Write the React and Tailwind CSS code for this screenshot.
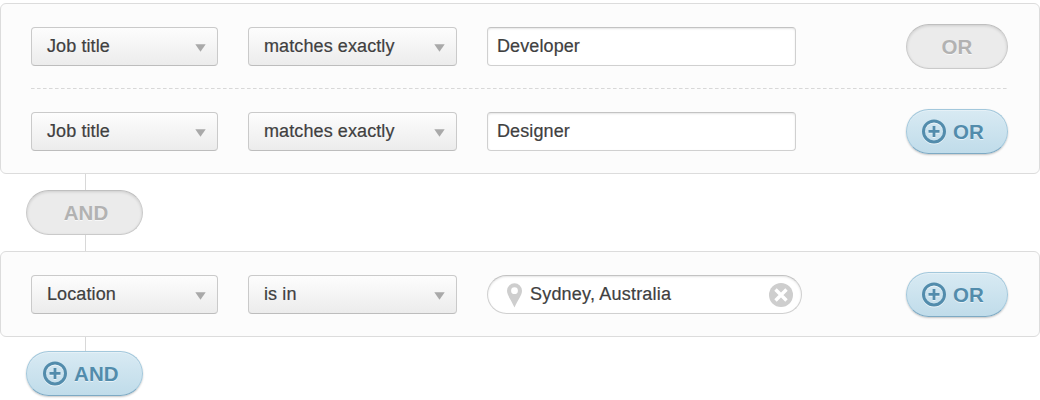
import React from "react";

function Label({ children, className = "" }) {
  return (
    <span
      className={`-mt-px text-[18px] leading-5 tracking-[0.1px] text-[#404040] [-webkit-text-stroke:0.2px_#404040] ${className}`}
    >
      {children}
    </span>
  );
}

function Select({ label, className }) {
  return (
    <button
      type="button"
      className={`flex h-[39px] items-center justify-between rounded-[4px] border border-[#cacaca] border-b-[#bdbdbd] bg-linear-to-b from-[#fdfdfd] to-[#ececec] pr-[11px] pl-[15px] text-left ${className}`}
    >
      <Label>{label}</Label>
      <svg width="11" height="8" viewBox="0 0 11 8" className="mt-[3px]">
        <path d="M0.3 0.3H10.7L5.5 7.8Z" fill="#a9a9a9" />
      </svg>
    </button>
  );
}

function TextField({ value }) {
  return (
    <div className="ml-[30px] flex h-[39px] w-[309px] items-center rounded-[4px] border border-[#d0d0d0] border-t-[#c3c3c3] bg-white pl-[9px] shadow-[inset_0_1px_2px_rgba(0,0,0,0.1)]">
      <Label>{value}</Label>
    </div>
  );
}

function LocationField({ value }) {
  return (
    <div className="ml-[30px] flex h-[39px] w-[315px] items-center rounded-full border border-[#d0d0d0] border-t-[#c3c3c3] bg-white pr-2 pl-[19px] shadow-[inset_0_1px_2px_rgba(0,0,0,0.1)]">
      <svg width="15" height="25" viewBox="0 0 15 25" className="mt-px">
        <path
          fillRule="evenodd"
          d="M7.5 0.3A7.5 7.5 0 0 0 0 7.8C0 12.2 4.2 17 7.5 24.6C10.8 17 15 12.2 15 7.8A7.5 7.5 0 0 0 7.5 0.3ZM7.5 4.3A3.4 3.4 0 1 1 7.5 11.1A3.4 3.4 0 1 1 7.5 4.3Z"
          fill="#cecece"
        />
      </svg>
      <Label className="ml-2 flex-1 tracking-[0.2px]">{value}</Label>
      <svg width="24" height="24" viewBox="0 0 24 24" className="mt-px">
        <circle cx="12" cy="12" r="12" fill="#cecece" />
        <path d="M6.5 6.5L17.5 17.5M17.5 6.5L6.5 17.5" stroke="#fff" strokeWidth="3.4" />
      </svg>
    </div>
  );
}

function AddButton({ label, className }) {
  return (
    <button
      type="button"
      className={`flex h-[45px] items-center rounded-full border border-[#a3c8dc] border-b-[#7eaac4] bg-linear-to-b from-[#d8eaf3] to-[#c0dcea] shadow-[0_1px_2px_rgba(0,0,0,0.22),inset_0_1px_0_rgba(255,255,255,0.35)] ${className}`}
    >
      <svg width="24" height="25" viewBox="0 0 24 25" className="drop-shadow-[0_1px_0_rgba(255,255,255,0.6)]">
        <circle cx="12" cy="12.4" r="10.5" fill="none" stroke="#528cac" strokeWidth="3" />
        <path d="M12 6.9V17.9M6.5 12.4H17.5" stroke="#528cac" strokeWidth="2.8" />
      </svg>
      <span className="ml-[7px] text-[20.5px] leading-6 font-bold tracking-[0.1px] text-[#528cac] text-shadow-[0_1px_0_rgba(255,255,255,0.6)]">
        {label}
      </span>
    </button>
  );
}

function PressedButton({ label, className }) {
  return (
    <button
      type="button"
      className={`flex h-[45px] items-center justify-center rounded-full border border-[#cacaca] border-t-[#bfbfbf] bg-[#ebebeb] shadow-[inset_0_1px_3px_rgba(0,0,0,0.13)] ${className}`}
    >
      <span className="text-[20.5px] leading-6 font-bold tracking-[0.1px] text-[#b2b2b2] text-shadow-[0_1px_0_rgba(255,255,255,0.7)]">
        {label}
      </span>
    </button>
  );
}

function Row({ field, operator, children, action }) {
  return (
    <div className="flex h-[45px] items-center">
      <Select label={field} className="w-[187px]" />
      <Select label={operator} className="ml-[30px] w-[209px]" />
      {children}
      <div className="ml-auto">{action}</div>
    </div>
  );
}

function Connector({ className }) {
  return <div className={`ml-[85px] w-px bg-[#d8d8d8] ${className}`} />;
}

export default function App() {
  return (
    <div className="h-[400px] w-[1040px] overflow-hidden bg-white pt-[3px] font-['Liberation_Sans',Arial,sans-serif]">
      <section className="h-[171px] rounded-[6px] border border-[#dcdcdc] bg-[#fcfcfc] pt-5 pr-[31px] pl-[30px]">
        <Row field="Job title" operator="matches exactly" action={<PressedButton label="OR" className="w-[102px]" />}>
          <TextField value="Developer" />
        </Row>
        <svg width="977" height="1" className="mt-[19px] mb-5 block">
          <path d="M0 0.5H977" stroke="#d8d8d8" strokeDasharray="3.6 2.4" />
        </svg>
        <Row field="Job title" operator="matches exactly" action={<AddButton label="OR" className="w-[102px] pl-[15px]" />}>
          <TextField value="Designer" />
        </Row>
      </section>
      <Connector className="h-4" />
      <PressedButton label="AND" className="ml-[26px] w-[117px] pl-[3px]" />
      <Connector className="h-4" />
      <section className="h-[86px] rounded-[6px] border border-[#dcdcdc] bg-[#fcfcfc] pt-5 pr-[31px] pl-[30px]">
        <Row field="Location" operator="is in" action={<AddButton label="OR" className="w-[102px] pl-[15px]" />}>
          <LocationField value="Sydney, Australia" />
        </Row>
      </section>
      <Connector className="h-3.5" />
      <AddButton label="AND" className="ml-[26px] w-[117px] pl-4" />
    </div>
  );
}
